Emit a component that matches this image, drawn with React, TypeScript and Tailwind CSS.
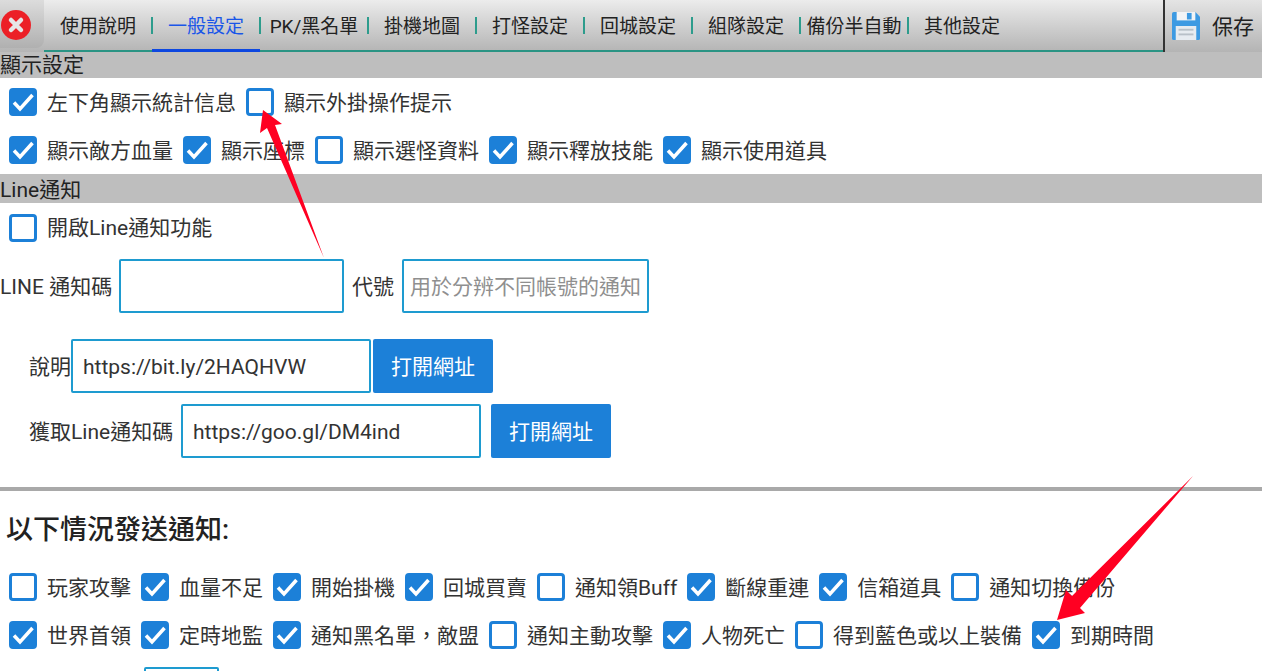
const fontStack = "[font-family:Roboto,'Noto_Sans_CJK_TC',sans-serif]";

const CheckItem = ({ label, checked = false }: { label: string; checked?: boolean }) => (
  <div className="flex items-center">
    <span
      className={`flex h-7 w-7 shrink-0 items-center justify-center rounded-[4px] border-[3px] border-[#1c80d8] ${
        checked ? "bg-[#1c80d8]" : "bg-white"
      }`}
    >
      {checked && (
        <svg viewBox="0 0 24 24" className="h-6 w-6 shrink-0" fill="none" stroke="white" strokeWidth="3.5">
          <path d="M3 12.5l6 6.5L21.5 5" />
        </svg>
      )}
    </span>
    <span className="ml-[10px] pt-[3px] text-[21px] whitespace-nowrap text-[#333]">{label}</span>
  </div>
);

const SectionHeader = ({ title, className }: { title: string; className: string }) => (
  <div className={`flex items-center bg-[#bebebe] text-[21px] text-[#222] ${className}`}>{title}</div>
);

const Tab = ({ label, width, active = false }: { label: string; width: string; active?: boolean }) => (
  <div className={`relative flex h-full shrink-0 items-center justify-center pt-[4px] text-[19px] whitespace-nowrap ${width}`}>
    <span className={active ? "text-[#1a56e8]" : "text-[#222]"}>{label}</span>
    {active && <span className="absolute right-0 bottom-[-2px] left-0 h-[3px] bg-[#0d47e0]" />}
    <span className="absolute top-[17px] right-[-1px] h-[17px] w-[2px] bg-[#2d9c8c]" />
  </div>
);

const OpenButton = ({ className = "" }: { className?: string }) => (
  <button className={`flex h-[54px] w-[120px] items-center justify-center rounded-[2px] bg-[#1c80d8] pt-[3px] text-[21px] text-white ${className}`}>
    打開網址
  </button>
);

const TextBox = ({ value, placeholder, width }: { value?: string; placeholder?: string; width: string }) => (
  <div className={`flex h-[54px] items-center rounded-[2px] border-2 border-[#1e9bd0] bg-white px-[10px] pt-[3px] text-[21px] whitespace-nowrap ${width}`}>
    {value && <span className="text-[#333]">{value}</span>}
    {placeholder && <span className="text-[#8f8f8f]">{placeholder}</span>}
  </div>
);

const App = () => {
  return (
    <div className={`relative h-[671px] w-[1262px] overflow-hidden bg-white ${fontStack}`}>
      {/* Top tab bar */}
      <div className="flex h-[52px] items-stretch bg-gradient-to-b from-[#ececec] to-[#b4b4b4]">
        <div className="flex h-[48px] w-[44px] shrink-0 items-center rounded-br-lg bg-gradient-to-b from-[#dcdcdc] to-[#b0b0b0] pt-[2px]">
          <svg viewBox="0 0 30 30" className="ml-[1px] h-[30px] w-[30px]">
            <circle cx="15" cy="15" r="15" fill="#ec2027" />
            <path d="M10 10l10 10M20 10L10 20" stroke="#e6e6e6" strokeWidth="4.5" strokeLinecap="round" />
          </svg>
        </div>
        <div className="flex min-w-0 flex-1 border-b-2 border-[#2a9484]">
          <Tab label="使用說明" width="w-[108px]" />
          <Tab label="一般設定" width="w-[108px]" active />
          <Tab label="PK/黑名單" width="w-[108px]" />
          <Tab label="掛機地圖" width="w-[108px]" />
          <Tab label="打怪設定" width="w-[108px]" />
          <Tab label="回城設定" width="w-[108px]" />
          <Tab label="組隊設定" width="w-[108px]" />
          <Tab label="備份半自動" width="w-[108px]" />
          <div className="flex h-full w-[108px] shrink-0 items-center justify-center pt-[4px] text-[19px] text-[#222]">其他設定</div>
        </div>
        <div className="flex w-[99px] shrink-0 items-center rounded-br-lg border-l-2 border-[#333] bg-gradient-to-b from-[#e4e4e4] to-[#b4b4b4]">
          <svg viewBox="0 0 30 30" className="ml-[7px] h-[28px] w-[28px]">
            <path d="M2 0h23l5 5v23a2 2 0 0 1-2 2H2a2 2 0 0 1-2-2V2a2 2 0 0 1 2-2z" fill="#3d9ae2" />
            <rect x="5" y="0" width="20" height="9" fill="#f2f4f6" />
            <rect x="16" y="1" width="5" height="7" fill="#3d9ae2" />
            <rect x="4" y="15" width="22" height="15" fill="#e6ebf0" />
            <rect x="7" y="18" width="16" height="2" fill="#b8c0c8" />
            <rect x="7" y="23" width="16" height="2" fill="#b8c0c8" />
          </svg>
          <span className="ml-[12px] pt-[3px] text-[21px] text-[#222]">保存</span>
        </div>
      </div>

      <SectionHeader title="顯示設定" className="h-[26px] pt-[2px]" />
      <div className="flex h-[48px] items-center gap-[10px] pl-[9px]">
        <CheckItem label="左下角顯示統計信息" checked />
        <CheckItem label="顯示外掛操作提示" />
      </div>
      <div className="flex h-[48px] items-center gap-[10px] pl-[9px]">
        <CheckItem label="顯示敵方血量" checked />
        <CheckItem label="顯示座標" checked />
        <CheckItem label="顯示選怪資料" />
        <CheckItem label="顯示釋放技能" checked />
        <CheckItem label="顯示使用道具" checked />
      </div>

      <SectionHeader title="Line通知" className="h-[29px] pt-[4px]" />
      <div className="flex h-[49px] items-center pl-[9px]">
        <CheckItem label="開啟Line通知功能" />
      </div>

      <div className="mt-[7px] flex items-center text-[21px] text-[#333]">
        <span className="w-[119px] pt-[3px] whitespace-nowrap">LINE 通知碼</span>
        <TextBox width="w-[225px]" />
        <span className="mx-[8px] pt-[3px]">代號</span>
        <TextBox placeholder="用於分辨不同帳號的通知" width="w-[247px] !px-[6px]" />
      </div>

      <div className="mt-[26px] flex items-center pl-[29px] text-[21px] text-[#333]">
        <span className="w-[42px] pt-[3px] whitespace-nowrap">說明</span>
        <TextBox value="https://bit.ly/2HAQHVW" width="w-[300px]" />
        <OpenButton className="ml-[2px]" />
      </div>
      <div className="mt-[11px] flex items-center pl-[29px] text-[21px] text-[#333]">
        <span className="w-[152px] pt-[3px] whitespace-nowrap">獲取Line通知碼</span>
        <TextBox value="https://goo.gl/DM4ind" width="w-[300px]" />
        <OpenButton className="ml-[10px]" />
      </div>

      <div className="mt-[29px] h-[4px] bg-[#a9a9a9]" />

      <div className="mt-[19px] flex h-[40px] items-center pl-[6px] text-[27px] font-medium text-[#222]">以下情況發送通知:</div>

      <div className="mt-[13px] flex h-[48px] items-center gap-[10px] pl-[9px]">
        <CheckItem label="玩家攻擊" />
        <CheckItem label="血量不足" checked />
        <CheckItem label="開始掛機" checked />
        <CheckItem label="回城買賣" checked />
        <CheckItem label="通知領Buff" />
        <CheckItem label="斷線重連" checked />
        <CheckItem label="信箱道具" checked />
        <CheckItem label="通知切換備份" />
      </div>
      <div className="flex h-[48px] items-center gap-[10px] pl-[9px]">
        <CheckItem label="世界首領" checked />
        <CheckItem label="定時地監" checked />
        <CheckItem label="通知黑名單，敵盟" checked />
        <CheckItem label="通知主動攻擊" />
        <CheckItem label="人物死亡" checked />
        <CheckItem label="得到藍色或以上裝備" />
        <CheckItem label="到期時間" checked />
      </div>
      <div className="mt-[8px] ml-[144px] h-[50px] w-[75px] rounded-[2px] border-2 border-[#1e9bd0] bg-white" />

      {/* Red annotation arrows */}
      <svg className="pointer-events-none absolute top-0 left-0 h-[671px] w-[1262px]" viewBox="0 0 1262 671">
        <path d="M263 110L282 124L275 125L324 258L267 128L260 133Z" fill="#ff0022" />
        <path d="M1193 476L1080 608L1085 613L1057 620L1066 590L1072 596Z" fill="#ff0022" />
      </svg>
    </div>
  );
};

export default App;
